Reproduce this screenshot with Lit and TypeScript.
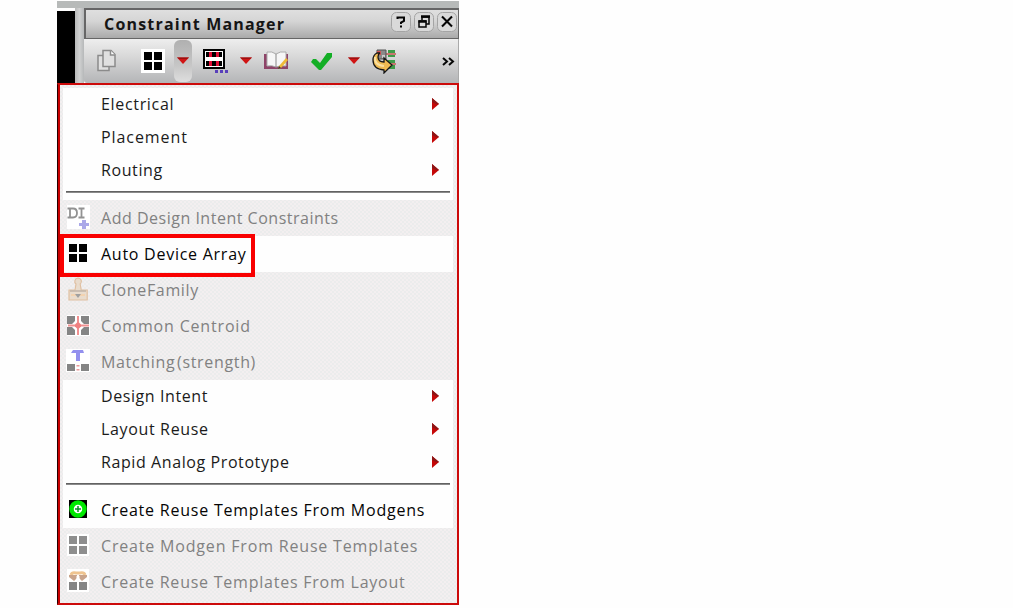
import { LitElement, html, css, svg, nothing } from "lit";
import { customElement, property } from "lit/decorators.js";
import { classMap } from "lit/directives/class-map.js";

type Item = { label: string; track?: number; icon?: string; disabled?: boolean; sub?: boolean; sep?: boolean; marked?: boolean; tall?: boolean; word?: number };

const items: Item[] = [
  { label: "Electrical", track: 0.67, sub: true },
  { label: "Placement", track: 0.93, sub: true },
  { label: "Routing", track: 0.6, sub: true },
  { label: "", sep: true },
  { label: "Add Design Intent Constraints", track: 0.51, icon: "intent", disabled: true, tall: true },
  { label: "Auto Device Array", track: 0.74, icon: "array", marked: true, tall: true },
  { label: "CloneFamily", track: 0.67, icon: "clone", disabled: true, tall: true },
  { label: "Common Centroid", track: 0.82, icon: "centroid", disabled: true, tall: true },
  { label: "Matching (strength)", track: 0.66, word: -3, icon: "matching", disabled: true, tall: true },
  { label: "Design Intent", track: 0.58, sub: true },
  { label: "Layout Reuse", track: 0.65, sub: true },
  { label: "Rapid Analog Prototype", track: 0.59, sub: true },
  { label: "", sep: true },
  { label: "Create Reuse Templates From Modgens", track: 0.78, icon: "add", tall: true },
  { label: "Create Modgen From Reuse Templates", track: 0.82, icon: "arrayOff", disabled: true, tall: true },
  { label: "Create Reuse Templates From Layout", track: 0.77, icon: "reuse", disabled: true, tall: true },
];

const squares = (c: string) => svg`<path fill=${c} d="M3 3h8v8H3zM13 3h8v8h-8zM3 13h8v8H3zM13 13h8v8h-8z"/>`;

const glyphs: Record<string, unknown> = {
  intent: svg`<path fill="#fff" d="M1 0h23v24H1z"/><g fill="none" stroke="#929292" stroke-width="1.800"><path d="M1.500 3.500h5.500q4 0 4 4.500t-4 4.500H1.500M4 3.500v9M12.500 3.500h6M12.500 12.500h6M15.500 3.500v9"/></g><path fill="#aaa8e8" d="M16 15h4v3h3v3h-3v3h-4v-3h-3v-3h3z"/>`,
  array: squares("#000"),
  arrayOff: svg`<path fill="#fff" d="M1 1h22v22H1z"/>${squares("#8e8e8e")}`,
  clone: svg`<path d="M12 1a3.400 3.400 0 0 1 2.200 6l1 6h6v10H3V13h6l1-6a3.400 3.400 0 0 1 2-6z" fill="#e9dccd" stroke="#e0c0a2" stroke-width="1.200"/><path d="M4 14h16" stroke="#c0b4a8" stroke-width="1.500"/><path d="M5 18h14" stroke="#f3d3b0" stroke-width="2"/><path d="M9 17h6l-3 4z" fill="#a0a0a0"/>`,
  centroid: svg`<path fill="#fff" d="M1 2h23v21H1z"/><path fill="#858585" d="M1 3h8v5l-3 3H1zM15 3h8v8h-5l-3-3zM1 14h5l3 3v5H1zM18 14h5v8h-8v-5z"/><path d="M12 3v19M2 12.500h21" stroke="#f19090" stroke-width="2"/><path fill="#f08080" d="M12 9.500h1l2 2v2l-2 2h-2l-2-2v-2l2-2z"/>`,
  matching: svg`<path fill="#fff" d="M0 0h24v23H0z"/><path fill="#9390ee" d="M7 1h10l1 3h-4v8h-4V4H5z"/><path fill="#858585" d="M1 15h8v7H1zM15 15h8v7h-8z"/><path fill="#eb9999" d="M10.500 16h3v1.500h-3zM10.500 20h3v1.500h-3z"/>`,
  add: svg`<path d="M3 3h18v18H3z"/><circle cx="12" cy="12" r="6.500" fill="#fff" stroke="#00e900" stroke-width="4.500"/><path d="M12 9v6M9 12h6" stroke="#0c8f28" stroke-width="1.500"/>`,
  reuse: svg`<path fill="#fff" d="M1 0h22v23H1z"/><path fill="#858585" d="M3 13h8v8H3zM13 13h8v8h-8z"/><path d="M5 6q1-3 5-2h4q4-1 5 2" fill="none" stroke="#efc48f" stroke-width="3"/><path d="M3 6h8v3l-3 3-5-4zM13 6h8v2l-5 4-3-3z" fill="#c9a48b"/><path d="M12 7v6" stroke="#fff" stroke-width="3"/>`,
};

const iconSvg = (name: string) => html`<svg class="icon" width="24" height="24" viewBox="0 0 24 24">${glyphs[name]}</svg>`;
const down = html`<svg class="down" width="12" height="8" viewBox="0 0 12 8"><path d="M0 .500h12L6 7z" fill="#d01414"/><path d="M0 .500h12l-2 1.500H2z" fill="#9c1010"/></svg>`;

@customElement("menu-row")
class MenuRow extends LitElement {
  @property({ attribute: false }) item!: Item;
  static styles = css`
    :host { display: block; }
    .row { height: 33px; box-sizing: border-box; display: flex; align-items: center; background: #fefefe; padding: 0 14px 2px 3px; color: #1b1b1b; position: relative; }
    .tall { height: 36px; color: #050505; padding-bottom: 0; }
    .disabled { color: #818181; background: transparent; }
    .sep { height: 13px; padding: 4px 3px 0; box-sizing: border-box; background: #fefefe; }
    .line { height: 2px; background: linear-gradient(#626262 50%, #8a8a8a 50%); }
    .slot { width: 24px; height: 24px; margin: 0 11px 2px 0; flex: none; }
    .icon { display: block; }
    .label { flex: 1; white-space: pre; }
    .mark { position: absolute; left: -3px; top: -2px; width: 187px; height: 35px; border: 4px solid #f90000; z-index: 2; }
  `;
  render() {
    const i = this.item;
    if (i.sep) return html`<div class="sep"><div class="line"></div></div>`;
    return html`<div class=${classMap({ row: true, tall: !!i.tall, disabled: !!i.disabled })}>
      <span class="slot">${i.icon ? iconSvg(i.icon) : nothing}</span>
      <span class="label" style="letter-spacing:${i.track}px;word-spacing:${i.word ?? 0}px">${i.label}</span>
      ${i.sub ? html`<svg width="8" height="12" viewBox="0 0 8 12"><path d="M1 0l7 6-7 6z" fill="#c50808"/><path d="M1 0l7 6-2 .500L1 4z" fill="#8d1616"/></svg>` : nothing}
      ${i.marked ? html`<i class="mark"></i>` : nothing}
    </div>`;
  }
}

@customElement("app-root")
class AppRoot extends LitElement {
  static styles = css`
    :host { display: block; width: 1013px; height: 608px; background: #fefefe; overflow: hidden; font: 16px "Open Sans", "Noto Sans", sans-serif; }
    .panel { width: 402px; margin-left: 57px; padding-top: 1px; }
    .edge { height: 7px; background: #b7bab9; }
    .head { display: flex; height: 75px; }
    .dark { width: 18px; margin-top: 3px; background: #000; }
    .split { width: 9px; background: linear-gradient(90deg, #b9baba, #d0d1d1, #b6b8b9); }
    .dock { flex: 1; display: flex; flex-direction: column; }
    .title { height: 31px; box-sizing: border-box; border: 2px solid #666; border-right-width: 1px; border-bottom-width: 1px; display: flex; align-items: center; padding: 0 1px 0 18px; background: linear-gradient(#dfdfdf, #d5d5d5 40%, #aaa); }
    .name { flex: 1; font-weight: 700; letter-spacing: 1.2px; color: #151515; white-space: nowrap; padding-bottom: 1px; }
    .btns { display: flex; gap: 3px; margin-top: -4px; }
    .btn { display: block; }
    .tools { height: 44px; display: flex; align-items: center; background: linear-gradient(#eeeeee, #dbdbdb 35%, #b4b5b7); border-bottom-left-radius: 3px; border-right: 1px solid #aaa; box-sizing: border-box; }
    .tools svg { display: block; flex: none; }
    .copy { margin-left: 13px; }
    .arr { margin-left: 24px; }
    .drop { width: 18px; height: 42px; margin-left: 9px; border-radius: 6px; background: linear-gradient(#b0b0b0, #c6c6c6 60%, #dedede); display: grid; place-items: center; }
    .film { margin-left: 11px; }
    .d2 { margin-left: 12px; }
    .book { margin-left: 12px; }
    .check { margin-left: 22px; }
    .d3 { margin-left: 15px; }
    .refresh { margin-left: 12px; }
    .more { margin-left: 44px; }
    .menu { height: 518px; box-sizing: content-box; border: 2px solid #cc0a0a; border-left: 1px solid #240000; display: flex; }
    .redline { width: 2px; background: #c80000; }
    .list { flex: 1; padding: 3px 4px 2px 3px; background: repeating-conic-gradient(#ebecec 0 25%, #f3eff0 0 50%) 0 0 / 4px 4px; }
  `;
  render() {
    return html`<div class="panel">
      <div class="edge"></div>
      <div class="head">
        <div class="dark"></div><div class="split"></div>
        <div class="dock">
          <div class="title"><span class="name">Constraint Manager</span>
            <div class="btns">
              ${[
                svg`<path d="M6.500 7V5.500h6.500v3.500L10 10.500V12M10 13.500v2" fill="none" stroke="#050505" stroke-width="2"/>`,
                svg`<path d="M8 5h7v7h-3M8 5v3" fill="none" stroke="#050505" stroke-width="1.500"/><path d="M7 4.500h9" stroke="#050505" stroke-width="2.500"/><path d="M5 9h7v6H5z" fill="#ddd" stroke="#050505" stroke-width="1.500"/><path d="M4.500 9.500h8" stroke="#050505" stroke-width="2.500"/>`,
                svg`<path d="M5 4.500l10 10M15 4.500L5 14.500" stroke="#050505" stroke-width="2.100"/>`,
              ].map((g) => html`<svg class="btn" width="20" height="20" viewBox="0 0 20 20"><rect x=".5" y=".5" width="19" height="19" rx="5" fill="#d9d9d9" stroke="#a4a4a4"/>${g}</svg>`)}
            </div>
          </div>
          <div class="tools">
            <svg class="copy" width="20" height="24" viewBox="0 0 20 24"><g fill="#e0e0e0" stroke="#8b8b8b" stroke-width="1.500"><path d="M1 6.500h11v15H1z"/><path d="M6 1.500h8l4 4v12H6z"/><path d="M13.500 1.500V6H18" fill="#fff"/></g></svg>
            <svg class="arr" width="24" height="24" viewBox="0 0 24 24"><path fill="#fff" d="M0 0h24v24H0z"/>${squares("#000")}</svg>
            <div class="drop">${down}</div>
            <svg class="film" width="25" height="25" viewBox="0 0 25 25"><path d="M1 1h20v18H1z" fill="#fff" stroke="#000" stroke-width="2"/><path d="M3 3h16v5H3zM3 12h16v5H3z"/><path d="M6 3h3v5H6zM13 3h3v5h-3zM6 12h3v5H6zM13 12h3v5h-3z" fill="#e40d36"/><path d="M12 21h3v3h-3zM17 21h3v3h-3zM22 21h3v3h-3z" fill="#5940bb"/></svg>
            <span class="d2">${down}</span>
            <svg class="book" width="25" height="20" viewBox="0 0 25 20"><path d="M0 3h3v12h19V3h2v15H0z" fill="#8e4468"/><path d="M3 1q5-1 9 2 4-3 10-2v14q-5-1-10 1-4-2-9-1z" fill="#f6f6f6" stroke="#aaa"/><path d="M12 3v13" stroke="#888"/><path d="M22 7l-7 8-1 3 3-1 7-8z" fill="#efba38"/><path d="M14 18l3-1-2-2z" fill="#333"/></svg>
            <svg class="check" width="22" height="19" viewBox="0 0 22 19"><path d="M0 10l2-3h3l4 4 7-10h5v4L10 18H8z" fill="#13ae25"/></svg>
            <span class="d3">${down}</span>
            <svg class="refresh" width="25" height="25" viewBox="0 0 25 25"><path d="M16 1h7v7h-7zM16 11h7v9h-7z" fill="#3e9b48"/><path d="M14 5h10M14 15h10" stroke="#c97670" stroke-width="2"/><path d="M5 1h9v9H5z" fill="#8a8a8a" stroke="#555"/><path d="M5 2h4v4H5z" fill="#d45456"/><path d="M10 6h3v3h-3z" fill="#ccc"/><path d="M5 4Q1 6 1 11q0 9 11 10v3l8-8-8-7v4q-6 0-6-5 0-3 2-4z" fill="#efbb52" stroke="#171717" stroke-width="1.300"/><path d="M3 8q-1 8 9 9" fill="none" stroke="#f9dfa0" stroke-width="2"/></svg>
            <svg class="more" width="14" height="11" viewBox="0 0 14 11"><path d="M2 2l4 3.500L2 9M8 2l4 3.500L8 9" fill="none" stroke="#080808" stroke-width="2"/></svg>
          </div>
        </div>
      </div>
      <div class="menu"><div class="redline"></div><div class="list">${items.map((i) => html`<menu-row .item=${i}></menu-row>`)}</div></div>
    </div>`;
  }
}
